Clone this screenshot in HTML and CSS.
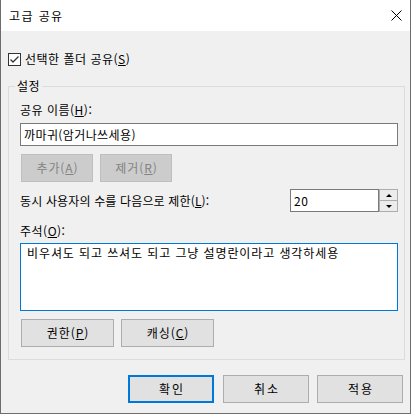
FILE: index.html
```html
<!DOCTYPE html>
<html lang="ko">
<head>
<meta charset="utf-8">
<title>고급 공유</title>
<link rel="stylesheet" href="styles.css">
</head>
<body>
<div class="window">
  <div class="titlebar">
    <span class="title">고급 공유</span>
    <span class="close"><svg width="11" height="11" viewBox="0 0 11 11"><path d="M0.5 0.5 L10.5 10.5 M10.5 0.5 L0.5 10.5" stroke="#000" stroke-width="1" fill="none"/></svg></span>
  </div>
  <div class="content">
    <div class="check-row">
      <span class="checkbox"><svg width="11" height="11" viewBox="0 0 11 11"><path d="M1.5 5.5 L4 8 L9.5 2.5" stroke="#333" stroke-width="1.3" fill="none"/></svg></span>
      <span>선택한 폴더 공유(<u>S</u>)</span>
    </div>
    <div class="group">
      <span class="group-title">설정</span>
      <div class="label">공유 이름(<u>H</u>):</div>
      <div class="textbox">까마귀(암거나쓰세용)</div>
      <div class="btn-row">
        <div class="btn small disabled">추가(<u>A</u>)</div>
        <div class="btn small disabled">제거(<u>R</u>)</div>
      </div>
      <div class="limit-row">
        <span class="limit-label">동시 사용자의 수를 다음으로 제한(<u>L</u>):</span>
        <div class="spinner">
          <div class="spin-value">20</div>
          <div class="spin-btns">
            <span class="spin-btn"><span class="tri-up"></span></span>
            <span class="spin-btn"><span class="tri-down"></span></span>
          </div>
        </div>
      </div>
      <div class="label comment-label">주석(<u>O</u>):</div>
      <div class="textarea">비우셔도 되고 쓰셔도 되고 그냥 설명란이라고 생각하세용</div>
      <div class="btn-row btn-row2">
        <div class="btn medium">권한(<u>P</u>)</div>
        <div class="btn medium">캐싱(<u>C</u>)</div>
      </div>
    </div>
    <div class="footer">
      <div class="btn wide default">확인</div>
      <div class="btn wide">취소</div>
      <div class="btn wide">적용</div>
    </div>
  </div>
</div>
</body>
</html>
```
FILE: styles.css
```css
* { box-sizing: border-box; }
html, body { margin: 0; padding: 0; background: #ffffff; }
body {
  font-family: "Noto Sans CJK KR", "Noto Sans", sans-serif;
  font-size: 12px;
  line-height: 16px;
  color: #000;
  letter-spacing: 0.5px;
}
u { text-decoration: underline; text-underline-offset: 1px; }
.window {
  width: 411px;
  height: 414px;
  border: 1px solid #6d6d6d;
  border-top: none;
  display: flex;
  flex-direction: column;
  background: #f0f0f0;
}
.titlebar {
  height: 31px;
  flex: none;
  background: #ffffff;
  display: flex;
  align-items: center;
  justify-content: space-between;
  padding: 0 8px 0 8px;
}
.title { font-size: 12px; letter-spacing: 1.4px; }
.close { display: flex; width: 11px; height: 11px; }
.content {
  flex: 1;
  padding: 20px 0 0 7px;
  display: flex;
  flex-direction: column;
}
.check-row {
  display: flex;
  align-items: center;
  gap: 4px;
  height: 16px;
}
.checkbox {
  width: 13px;
  height: 13px;
  border: 1px solid #333333;
  background: #ffffff;
  display: flex;
  align-items: center;
  justify-content: center;
}
.group {
  position: relative;
  margin: 19px 5px 0 0;
  border: 1px solid #dcdcdc;
  padding: 15px 6px 12px 11px;
  display: flex;
  flex-direction: column;
}
.group-title {
  position: absolute;
  top: -9px;
  left: 6px;
  padding: 0 2px;
  background: #f0f0f0;
}
.label { height: 16px; }
.textbox {
  margin-top: 5px;
  height: 23px;
  border: 1px solid #7a7a7a;
  background: #ffffff;
  padding-left: 3px;
  line-height: 21px;
  letter-spacing: 0.4px;
}
.btn-row {
  display: flex;
  gap: 7px;
  margin-top: 8px;
  padding-left: 1px;
}
.btn {
  height: 28px;
  border: 1px solid #adadad;
  background: #e1e1e1;
  display: flex;
  align-items: center;
  justify-content: center;
  letter-spacing: 0.9px;
  padding-left: 1px;
}
.btn.small { width: 72px; }
.btn.medium { width: 93px; }
.btn.wide { width: 86px; letter-spacing: 2px; padding-left: 2px; }
.btn.disabled {
  background: #cccccc;
  border-color: #bfbfbf;
  color: #838383;
}
.btn.default { border: 2px solid #0078d7; margin-right: 1px; }
.limit-row {
  margin-top: 7px;
  display: flex;
  align-items: center;
  justify-content: space-between;
}
.limit-label { letter-spacing: 0.15px; }
.spinner {
  display: flex;
  width: 108px;
  height: 23px;
}
.spin-value {
  width: 89px;
  height: 23px;
  border: 1px solid #7a7a7a;
  background: #ffffff;
  padding-left: 3px;
  line-height: 21px;
}
.spin-btns {
  width: 19px;
  display: flex;
  flex-direction: column;
}
.spin-btn {
  height: 12px;
  border: 1px solid #adadad;
  background: #ececec;
  display: flex;
  align-items: center;
  justify-content: center;
}
.spin-btn + .spin-btn { height: 11px; border-top: none; }
.tri-up {
  width: 0; height: 0;
  border-left: 3px solid transparent;
  border-right: 3px solid transparent;
  border-bottom: 3px solid #000;
}
.tri-down {
  width: 0; height: 0;
  border-left: 3px solid transparent;
  border-right: 3px solid transparent;
  border-top: 3px solid #000;
}
.comment-label { margin-top: 11px; }
.textarea {
  margin-top: 4px;
  height: 68px;
  border: 1px solid #0078d7;
  background: #ffffff;
  padding: 1px 6px;
  letter-spacing: 0.9px;
}
.btn-row2 { margin-top: 8px; }
.footer {
  margin-top: 15px;
  display: flex;
  justify-content: flex-end;
  gap: 8px;
  padding-right: 7px;
}
```
